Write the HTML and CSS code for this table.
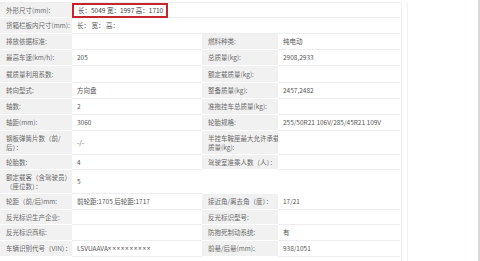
FILE: index.html
```html
<!DOCTYPE html>
<html lang="zh">
<head>
<meta charset="utf-8">
<link rel="stylesheet" href="styles.css">
</head>
<body>
<div class="page">
  <div class="sheet">
    <div class="lab top">外形尺寸(mm):</div>
    <div class="val wide top"><span class="hl">长：5049 宽：1997 高：1710</span></div>

    <div class="lab">货箱栏板内尺寸(mm):</div>
    <div class="val wide">长： 宽： 高：</div>

    <div class="lab">排放依据标准:</div>
    <div class="val"></div>
    <div class="lab">燃料种类:</div>
    <div class="val">纯电动</div>

    <div class="lab">最高车速(km/h):</div>
    <div class="val">205</div>
    <div class="lab">总质量(kg):</div>
    <div class="val">2908,2933</div>

    <div class="lab">载质量利用系数:</div>
    <div class="val"></div>
    <div class="lab">额定载质量(kg):</div>
    <div class="val"></div>

    <div class="lab">转向型式:</div>
    <div class="val">方向盘</div>
    <div class="lab">整备质量(kg):</div>
    <div class="val">2457,2482</div>

    <div class="lab">轴数:</div>
    <div class="val">2</div>
    <div class="lab">准拖挂车总质量(kg):</div>
    <div class="val"></div>

    <div class="lab">轴距(mm):</div>
    <div class="val">3060</div>
    <div class="lab">轮胎规格:</div>
    <div class="val">255/50R21 106V/285/45R21 109V</div>

    <div class="lab tall">钢板弹簧片数（前/<br>后）：</div>
    <div class="val tall">-/-</div>
    <div class="lab tall">半挂车鞍座最大允许承载<br>质量(kg):</div>
    <div class="val tall"></div>

    <div class="lab">轮胎数:</div>
    <div class="val">4</div>
    <div class="lab">驾驶室准乘人数（人）：</div>
    <div class="val"></div>

    <div class="lab tall">额定载客（含驾驶员）<br>（座位数）：</div>
    <div class="val tall">5</div>
    <div class="blank tall"></div>
    <div class="blank tall"></div>

    <div class="lab">轮距（前/后)mm:</div>
    <div class="val">前轮距:1705 后轮距:1717</div>
    <div class="lab">接近角/离去角（度）：</div>
    <div class="val">17/21</div>

    <div class="lab">反光标识生产企业:</div>
    <div class="val"></div>
    <div class="lab">反光标识型号:</div>
    <div class="val"></div>

    <div class="lab">反光标识商标:</div>
    <div class="val"></div>
    <div class="lab">防抱死制动系统:</div>
    <div class="val">有</div>

    <div class="lab">车辆识别代号（VIN）：</div>
    <div class="val">LSVUAAVA<span class="mask">××××××××××</span></div>
    <div class="lab">前悬/后悬(mm):</div>
    <div class="val">938/1051</div>
  </div>
  <div class="side"></div>
</div>
</body>
</html>
```

FILE: styles.css
```css
* { box-sizing: border-box; }
html, body {
  margin: 0;
  padding: 0;
  background: #ffffff;
}
body {
  font-family: "Noto Sans CJK SC", "Noto Sans", sans-serif;
  font-size: 6.5px;
  color: #555;
  width: 480px;
  height: 261px;
  overflow: hidden;
}
.page {
  display: flex;
  height: 261px;
  padding-top: 2px;
  border-right: 2px solid #d6d9d9;
}
.sheet {
  display: grid;
  grid-template-columns: 72px 130px 76px 122px;
  grid-template-rows: 16px 16px 16px 16px 17px 16px 16px 16px 24px 15px 24px 16px 15px 16px 16px;
  width: 402px;
  border-right: 1px solid #f0f0f0;
  align-content: start;
}
.lab, .val, .blank {
  display: flex;
  align-items: center;
  white-space: nowrap;
  line-height: 9px;
}
.lab {
  background: #f1f1f1;
  color: #6a6a6a;
  padding-left: 6px;
  border-bottom: 1px solid #fff;
}
.val {
  background: #fff;
  color: #555;
  padding-left: 5px;
  border-bottom: 1px solid #eeeeee;
}
.blank { background: #fff; }
.wide { grid-column: span 3; }
.top { border-top: 1px solid #eeeeee; }
.val.wide.top { padding-left: 0; }
.hl {
  display: inline-flex;
  align-items: center;
  height: 15px;
  padding: 0 3px 0 4px;
  border: 2px solid #c5262d;
  color: #444;
}
.mask {
  font-family: "Noto Sans", "Liberation Sans", sans-serif;
  letter-spacing: 0.6px;
}
.side {
  flex: 1;
  margin-left: 5px;
  border-left: 1px solid #f2f2f2;
}
```
